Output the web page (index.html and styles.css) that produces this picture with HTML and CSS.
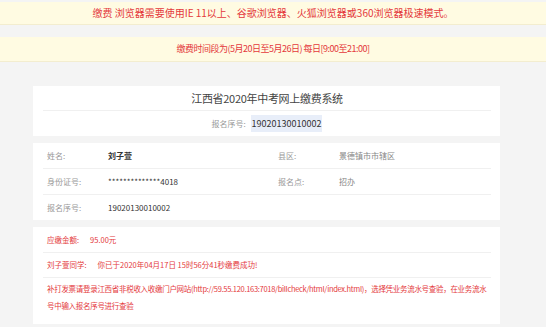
FILE: index.html
```html
<!DOCTYPE html>
<html lang="zh-CN">
  <head>
    <meta charset="UTF-8" />
    <meta name="viewport" content="width=device-width, initial-scale=1.0" />
    <title>江西省2020年中考网上缴费系统</title>
    <link rel="stylesheet" href="styles.css">
  </head>
  <body>
    <!-- Notices -->
    <div class="notice">缴费 浏览器需要使用IE 11以上、谷歌浏览器、火狐浏览器或360浏览器极速模式。</div>
    <div class="notice notice-time">缴费时间段为(5月20日至5月26日) 每日[9:00至21:00]</div>

    <div class="container">
      <!-- Header card -->
      <div class="card card-head">
        <h1>江西省2020年中考网上缴费系统</h1>
        <div class="reg">
          <span class="reg-label">报名序号:</span>
          <span class="reg-no">19020130010002</span>
        </div>
      </div>

      <!-- Student info -->
      <div class="card">
        <div class="info-row">
          <div class="cell"><span class="label">姓名:</span><span class="value strong">刘子萱</span></div>
          <div class="cell"><span class="label">县区:</span><span class="value light">景德镇市市辖区</span></div>
        </div>
        <div class="info-row">
          <div class="cell"><span class="label">身份证号:</span><span class="value">**************4018</span></div>
          <div class="cell"><span class="label">报名点:</span><span class="value light">招办</span></div>
        </div>
        <div class="info-row">
          <div class="cell"><span class="label">报名序号:</span><span class="value">19020130010002</span></div>
          <div class="cell"></div>
        </div>
      </div>

      <!-- Payment result -->
      <div class="card card-pay">
        <div class="pay-row"><span class="pay-label">应缴金额:</span>95.00元</div>
        <div class="pay-row"><span class="pay-label">刘子萱同学:</span>你已于2020年04月17日 15时56分41秒缴费成功!</div>
        <p class="pay-note">补打发票请登录江西省非税收入收缴门户网站(http://59.55.120.163:7018/billcheck/html/index.html)，选择凭业务流水号查验，在业务流水号中输入报名序号进行查验</p>
      </div>
    </div>
  </body>
</html>
```

FILE: styles.css
```css
body {
  font-family: "Noto Sans CJK SC", "Noto Sans", sans-serif;
  background-color: #f4f4f4;
  color: #333;
  margin: 0;
  padding: 2px 0 0;
}

.notice {
  background-color: #fffbe2;
  border-bottom: 1px solid #f3edcf;
  color: #e4393c;
  font-size: 10px;
  line-height: 22px;
  height: 22px;
  text-align: center;
  margin-bottom: 12px;
}

.notice-time {
  height: 24px;
  line-height: 24px;
  font-size: 9px;
  letter-spacing: -0.5px;
  margin-bottom: 0;
}

.container {
  width: 467px;
  margin: 24px 0 0 33px;
}

.card {
  background-color: #fff;
  padding: 0 9px 0 10px;
  margin-bottom: 7px;
}

.card-head h1 {
  margin: 0;
  font-size: 11px;
  font-weight: normal;
  letter-spacing: -0.3px;
  color: #444;
  text-align: center;
  line-height: 24px;
  border-bottom: 1px solid #f0f0f0;
}

.reg {
  text-align: center;
  line-height: 25px;
  height: 25px;
  font-size: 8px;
}

.reg-label {
  color: #999;
  margin-right: 3px;
}

.reg-no {
  background-color: #e8eef9;
  color: #333;
  font-size: 9px;
  padding: 2px 1px;
}

.info-row {
  display: grid;
  grid-template-columns: 231px 1fr;
  height: 25px;
  align-items: center;
  border-bottom: 1px solid #f0f0f0;
  font-size: 8px;
}

.info-row:last-child {
  border-bottom: none;
}

.cell {
  padding-left: 4px;
  display: flex;
}

.label {
  width: 61px;
  color: #999;
}

.value {
  color: #333;
}

.strong {
  font-weight: bold;
}

.light {
  color: #888;
}

.card-pay {
  color: #e4393c;
  font-size: 7.5px;
  padding-top: 1px;
}

.pay-row {
  height: 24px;
  line-height: 24px;
  padding-left: 4px;
  border-bottom: 1px solid #f0f0f0;
}

.pay-label {
  margin-right: 11px;
}

.pay-note {
  margin: 0;
  padding: 2px 0 10px 4px;
  line-height: 17px;
  letter-spacing: -0.3px;
}
```
